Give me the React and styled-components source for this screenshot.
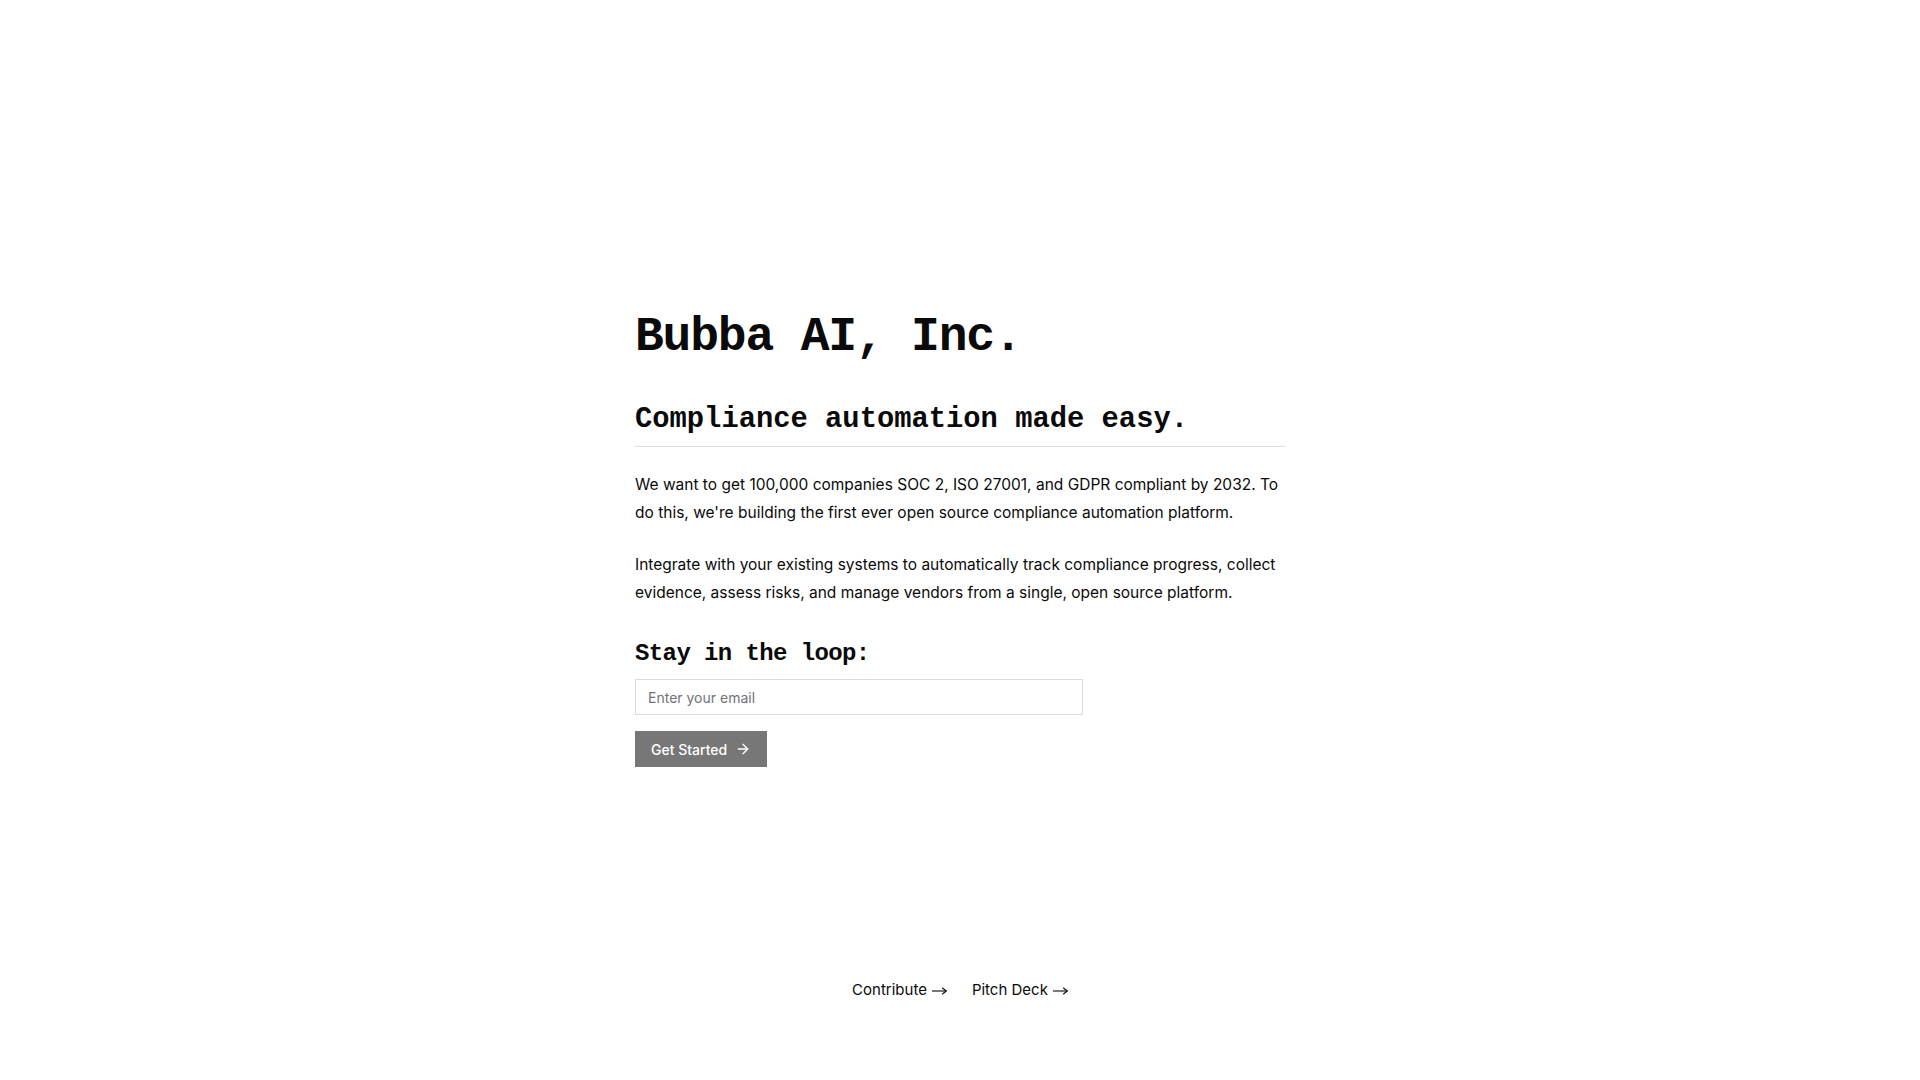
import React from 'react';
import styled, { createGlobalStyle } from 'styled-components';
import { ArrowRight } from 'lucide-react';

const GlobalStyle = createGlobalStyle`
  html, body {
    margin: 0;
    padding: 0;
    background: #ffffff;
    color: #0a0a0a;
    font-family: Inter, "Liberation Sans", sans-serif;
  }
  * { box-sizing: border-box; }
`;

const Page = styled.div`
  min-height: 100vh;
  display: flex;
  flex-direction: column;
`;

const Main = styled.main`
  width: 650px;
  margin: 0 auto;
  padding-top: 309px;
`;

const Title = styled.h1`
  margin: 0;
  font-family: "Liberation Mono", monospace;
  font-size: 48px;
  line-height: 1.2;
  font-weight: 700;
  letter-spacing: -1.2px;
  color: #0a0a0a;
`;

const Subtitle = styled.h2`
  margin: 36px 0 0;
  padding-bottom: 9px;
  border-bottom: 1px solid #dedede;
  font-family: "Liberation Mono", monospace;
  font-size: 28.8px;
  line-height: 34px;
  font-weight: 700;
`;

const Paragraph = styled.p`
  margin: ${(p) => p.$top}px 0 0;
  font-size: 15.5px;
  line-height: 28px;
  color: #0a0a0a;
`;

const SectionTitle = styled.h3`
  margin: 33px 0 0;
  font-family: "Liberation Mono", monospace;
  font-size: 24px;
  line-height: 1.2;
  font-weight: 700;
  letter-spacing: -0.6px;
`;

const Form = styled.form`
  display: flex;
  flex-direction: column;
  align-items: flex-start;
  gap: 16px;
  margin-top: 11px;
`;

const EmailInput = styled.input`
  width: 448px;
  height: 36px;
  padding: 0 12px;
  border: 1px solid #dcdcdc;
  border-radius: 0;
  font-family: Inter, "Liberation Sans", sans-serif;
  font-size: 14px;
  color: #0a0a0a;
  outline: none;
  &::placeholder { color: #71717a; }
`;

const SubmitButton = styled.button`
  display: inline-flex;
  align-items: center;
  gap: 8px;
  height: 36px;
  padding: 0 16px;
  border: none;
  border-radius: 0;
  background: #777777;
  color: #ffffff;
  font-family: Inter, "Liberation Sans", sans-serif;
  font-size: 14px;
  font-weight: 500;
  cursor: pointer;
`;

const Footer = styled.footer`
  margin-top: auto;
  display: flex;
  justify-content: center;
  gap: 25px;
  padding-bottom: 78px;
`;

const FooterLink = styled.a`
  display: inline-flex;
  align-items: center;
  gap: 5px;
  font-size: 15px;
  line-height: 24px;
  color: #0a0a0a;
  text-decoration: none;
`;

const LongArrow = () => (
  <svg width="15" height="8" viewBox="0 0 15 8" fill="none" stroke="#0a0a0a" strokeWidth="1.1" style={{ marginTop: 2 }}>
    <path d="M0 4H14.3" />
    <path d="M10.5 1L14.3 4L10.5 7" strokeLinejoin="round" strokeLinecap="round" />
  </svg>
);

const App = () => {
  return (
    <Page>
      <GlobalStyle />
      <Main>
        <Title>Bubba AI, Inc.</Title>
        <Subtitle>Compliance automation made easy.</Subtitle>
        <Paragraph $top={24}>
          We want to get 100,000 companies SOC 2, ISO 27001, and GDPR compliant by 2032. To do this, we're building the first ever open source compliance automation platform.
        </Paragraph>
        <Paragraph $top={24}>
          Integrate with your existing systems to automatically track compliance progress, collect evidence, assess risks, and manage vendors from a single, open source platform.
        </Paragraph>
        <SectionTitle>Stay in the loop:</SectionTitle>
        <Form onSubmit={(e) => e.preventDefault()}>
          <EmailInput type="email" placeholder="Enter your email" autoFocus />
          <SubmitButton type="submit">
            Get Started
            <ArrowRight size={16} strokeWidth={2} />
          </SubmitButton>
        </Form>
      </Main>
      <Footer>
        <FooterLink href="#">Contribute<LongArrow /></FooterLink>
        <FooterLink href="#">Pitch Deck<LongArrow /></FooterLink>
      </Footer>
    </Page>
  );
};

export default App;
